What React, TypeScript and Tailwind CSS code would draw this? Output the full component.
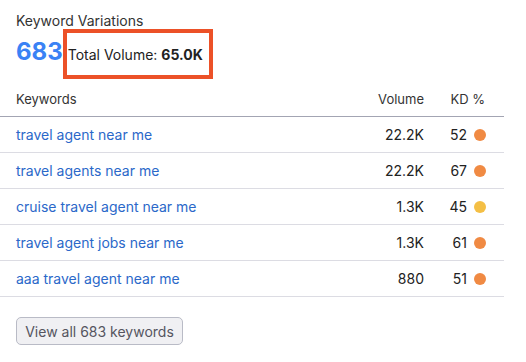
import React from "react";

const rows = [
  { k: "travel agent near me", v: "22.2K", kd: 52, c: "#f08a43" },
  { k: "travel agents near me", v: "22.2K", kd: 67, c: "#f08a43" },
  { k: "cruise travel agent near me", v: "1.3K", kd: 45, c: "#f4bf45" },
  { k: "travel agent jobs near me", v: "1.3K", kd: 61, c: "#f08a43" },
  { k: "aaa travel agent near me", v: "880", kd: 51, c: "#f08a43" },
];

export default function App() {
  return (
    <div
      className="w-[526px] h-[362px] bg-white text-[#333333]"
      style={{ fontFamily: "Inter, 'Noto Sans', sans-serif" }}
    >
      <div className="pl-4 pt-[12px] text-[14px] leading-[17px] text-[#333333]">
        Keyword Variations
      </div>
      <div className="flex items-baseline pl-4">
        <span className="text-[24px] font-bold leading-[30px] text-[#3a82f5]">683</span>
        <div className="flex h-[50px] items-center border-[4px] border-[#ec5128] pl-[1px] pr-[6px] text-[14px] text-[#222222]">
          <span>Total Volume:&nbsp;</span>
          <span className="font-bold">65.0K</span>
        </div>
      </div>
      <div className="mt-[4px] w-[504px]">
        <div className="flex h-[34px] items-center border-b border-[#a3a5b3] text-[13px] text-[#333333]">
          <div className="flex-1 pl-4">Keywords</div>
          <div className="text-right">Volume</div>
          <div className="w-[80px] pr-[19px] text-right">KD %</div>
        </div>
        {rows.map((r) => (
          <div
            key={r.k}
            className="flex h-[36px] items-center border-b border-[#dcdce3] text-[14px]"
          >
            <div className="flex-1 pl-4 text-[#2b68c9]">{r.k}</div>
            <div className="text-right text-[#222222]">{r.v}</div>
            <div className="flex w-[80px] items-center justify-end gap-[7px] pr-[18px] text-[#222222]">
              <span>{r.kd}</span>
              <span className="inline-block h-[12px] w-[12px] rounded-full" style={{ backgroundColor: r.c }} />
            </div>
          </div>
        ))}
      </div>
      <div className="pl-4 pt-[20px]">
        <button className="flex h-[28px] w-[167px] items-center justify-center rounded-[5px] border border-[#b9bbc6] bg-[#f0f0f3] text-[14px] text-[#55555f]">
          View all 683 keywords
        </button>
      </div>
    </div>
  );
}
